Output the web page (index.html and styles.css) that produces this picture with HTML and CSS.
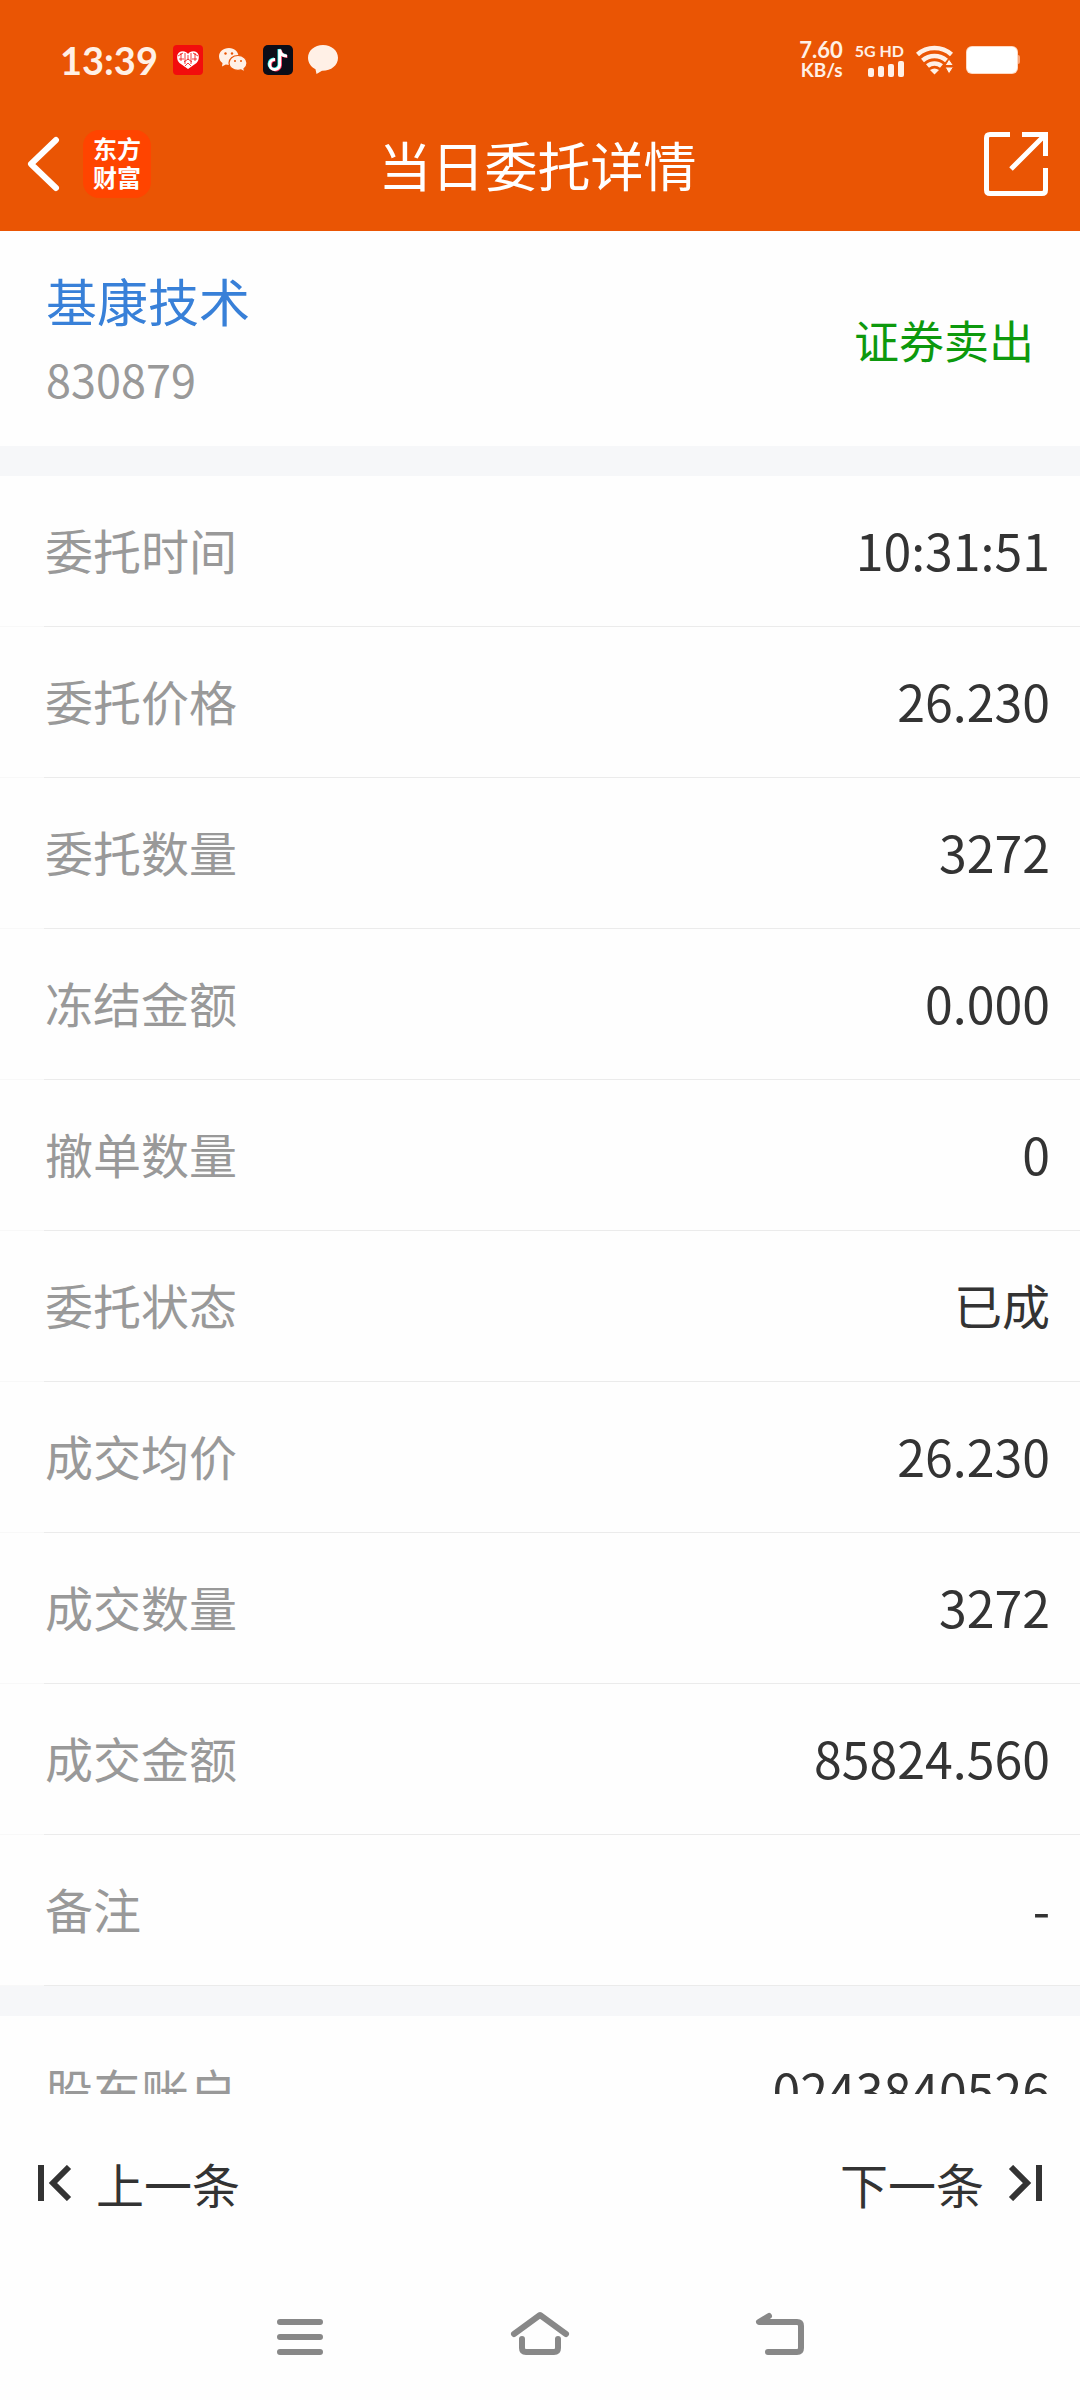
FILE: index.html
```html
<!DOCTYPE html>
<html lang="zh-CN">
<head>
    <meta charset="UTF-8">
    <meta name="viewport" content="width=device-width, initial-scale=1.0">
    <title>当日委托详情</title>
    <link rel="stylesheet" href="styles.css">
</head>
<body>
    <div class="app">
        <header class="header">
            <div class="status-bar">
                <span class="clock">13:39</span>
                <div class="notifications">
                    <svg width="30" height="30" viewBox="0 0 30 30">
                        <rect width="30" height="30" rx="4" fill="#f20d0d"/>
                        <path d="M15 24 L6.500 18 C3.500 15 3.500 9.500 6 7.500 C9 5.500 13 6 15 9 C17 6 21 5.500 24 7.500 C26.500 9.500 26.500 15 23.500 18 Z" fill="#fff"/>
                        <path d="M5 11 L10 8 M8 8 V16 M12 8 V19 M6 14 H11 M15 10 V15 M18 8 V19 M22 8 V16 M20 8 L25 11 M19 14 H24 M11 17 L15 14 L19 17 M12 21 L15 18 L18 21" fill="none" stroke="#f20d0d" stroke-width="0.800"/>
                    </svg>
                    <svg width="30" height="30" viewBox="0 0 30 30">
                        <path d="M11 3 C5 3 1 7 1 11.500 C1 14 2.300 16.500 4.500 18 L4 21.500 L7.800 19.500 C9 19.800 10 20 11.500 20 C17 20 20.500 16 20.500 11.500 C20.500 7 16.500 3 11 3 Z" fill="#fff0e6"/>
                        <path d="M20 10.500 C14.800 10.500 11 13.800 11 18 C11 22.200 14.800 25.300 20 25.300 C21 25.300 22 25.200 23 24.900 L26.600 27 L26 23.700 C28 22.300 29 20.300 29 18 C29 13.800 25.200 10.500 20 10.500 Z" fill="#fff0e6" stroke="#ea5504" stroke-width="1.200"/>
                        <g fill="#ea5504">
                            <circle cx="7.500" cy="8.500" r="1.200"/>
                            <circle cx="14" cy="8.500" r="1.200"/>
                            <circle cx="17" cy="16" r="1"/>
                            <circle cx="23" cy="16" r="1"/>
                        </g>
                    </svg>
                    <svg width="30" height="30" viewBox="0 0 30 30">
                        <rect width="30" height="30" rx="5" fill="#0c0d18"/>
                        <g fill="none" stroke-width="3">
                            <path d="M16 4 V19.500 A5 5 0 1 1 11 14 M16 4 C16.500 8 19 10.500 23 10.500" stroke="#25f4ee"/>
                            <path d="M17.500 5.500 V20.500 A5 5 0 1 1 12.500 15 M17.500 5.500 C18 9 20.500 11.500 24.500 11.500" stroke="#fe2c55"/>
                            <path d="M16.700 4.500 V20 A5 5 0 1 1 12 14.500 M16.700 4.500 C17.300 8.500 20 11 24 11" stroke="#fff"/>
                        </g>
                    </svg>
                    <svg width="30" height="30" viewBox="0 0 30 30">
                        <path d="M15 0 C6.500 0 0 5.500 0 12.800 C0 17.800 3 22 7.500 24.200 L8.500 29 L14 25.800 C23 26 30 20.500 30 12.800 C30 5.500 23.500 0 15 0 Z" fill="#fff0e6"/>
                    </svg>
                </div>
                <div class="system">
                    <div class="net-speed">
                        <span>7.60</span>
                        <span class="unit">KB/s</span>
                    </div>
                    <div class="signal">
                        <span>5G HD</span>
                        <svg width="36" height="16" viewBox="0 0 36 16" fill="#fff0e6">
                            <rect x="0" y="7" width="6" height="9" rx="2"/>
                            <rect x="10" y="5" width="6" height="11" rx="2"/>
                            <rect x="20" y="3" width="6" height="13" rx="2"/>
                            <rect x="30" y="0" width="6" height="16" rx="2"/>
                        </svg>
                    </div>
                    <svg width="38" height="30" viewBox="0 0 38 30">
                        <g fill="none" stroke="#fff0e6" stroke-width="4.500">
                            <path d="M1.500 9.500 C11 0.800 26 0.800 35.500 9.500"/>
                            <path d="M6.500 15.500 C13.500 9.500 23.500 9.500 30.500 15.500"/>
                            <path d="M11.500 21 C15.500 17.500 21.500 17.500 25.500 21"/>
                        </g>
                        <path d="M14 25 Q18.500 22 23 25 L18.500 29.500 Z" fill="#fff0e6"/>
                        <path d="M29 20.500 L33 14 L37.500 20.500 Z M29 22 L33 29 L37.500 22 Z" fill="#fff0e6" stroke="#ea5504" stroke-width="1"/>
                    </svg>
                    <svg width="54" height="28" viewBox="0 0 54 28">
                        <rect x="50" y="9" width="4" height="9" rx="2" fill="#f9a67b"/>
                        <rect x="0" y="0" width="52" height="28" rx="6" fill="#ffd9c2"/>
                        <rect x="1" y="1" width="50" height="26" rx="5" fill="#fff"/>
                    </svg>
                </div>
            </div>
            <div class="title-bar">
                <div class="title-left">
                    <button class="icon-btn" type="button" aria-label="返回">
                        <svg width="34" height="56" viewBox="0 0 34 56" fill="none" stroke="#fff" stroke-width="6" stroke-linecap="round" stroke-linejoin="round">
                            <path d="M29 4 L4 28 L29 52"/>
                        </svg>
                    </button>
                    <div class="logo"><span>东方</span><span>财富</span></div>
                </div>
                <h1>当日委托详情</h1>
                <button class="icon-btn share" type="button" aria-label="分享">
                    <svg width="64" height="64" viewBox="0 0 64 64" fill="none" stroke="#fff" stroke-width="5">
                        <path d="M26 2.500 H6 Q2.500 2.500 2.500 6 V58 Q2.500 61.500 6 61.500 H58 Q61.500 61.500 61.500 58 V36"/>
                        <path d="M38 2.500 H61.500 V24 M61 3 L27 37"/>
                    </svg>
                </button>
            </div>
        </header>

        <main class="content">
            <section class="stock">
                <div>
                    <a class="stock-name" href="#">基康技术</a>
                    <div class="stock-code">830879</div>
                </div>
                <span class="direction">证券卖出</span>
            </section>

            <dl class="details">
                <div class="row"><dt>委托时间</dt><dd>10:31:51</dd></div>
                <div class="row"><dt>委托价格</dt><dd>26.230</dd></div>
                <div class="row"><dt>委托数量</dt><dd>3272</dd></div>
                <div class="row"><dt>冻结金额</dt><dd>0.000</dd></div>
                <div class="row"><dt>撤单数量</dt><dd>0</dd></div>
                <div class="row"><dt>委托状态</dt><dd class="text">已成</dd></div>
                <div class="row"><dt>成交均价</dt><dd>26.230</dd></div>
                <div class="row"><dt>成交数量</dt><dd>3272</dd></div>
                <div class="row"><dt>成交金额</dt><dd>85824.560</dd></div>
                <div class="row"><dt>备注</dt><dd>-</dd></div>
            </dl>

            <dl class="details">
                <div class="row"><dt>股东账户</dt><dd>0243840526</dd></div>
            </dl>
        </main>

        <footer class="pager">
            <button class="pager-btn" type="button">
                <svg width="34" height="36" viewBox="0 0 34 36" fill="none" stroke="#333" stroke-width="6">
                    <path d="M3 0 V36 M31 2 L15 18 L31 34"/>
                </svg>
                上一条
            </button>
            <button class="pager-btn" type="button">
                下一条
                <svg width="34" height="36" viewBox="0 0 34 36" fill="none" stroke="#333" stroke-width="6">
                    <path d="M31 0 V36 M3 2 L19 18 L3 34"/>
                </svg>
            </button>
        </footer>

        <nav class="system-nav">
            <button class="icon-btn" type="button" aria-label="最近任务">
                <svg width="60" height="46" viewBox="0 0 60 46">
                    <path d="M10 11 H50 M10 26 H50 M10 41 H50"/>
                </svg>
            </button>
            <button class="icon-btn" type="button" aria-label="主页">
                <svg width="60" height="46" viewBox="0 0 60 46">
                    <path d="M4 23 L30 4 L56 23 M12 28 V37 Q12 41 16 41 H44 Q48 41 48 37 V28"/>
                </svg>
            </button>
            <button class="icon-btn" type="button" aria-label="返回">
                <svg width="60" height="46" viewBox="0 0 60 46">
                    <path d="M19 5 L9 11 H47 Q51 11 51 15 V37 Q51 41 47 41 H18"/>
                </svg>
            </button>
        </nav>
    </div>
</body>
</html>
```
FILE: styles.css
```css
* {
    margin: 0;
    padding: 0;
    box-sizing: border-box;
}

body {
    font-family: 'Noto Sans CJK SC', sans-serif;
    background: #fefefe;
    color: #333;
}

button {
    border: none;
    background: transparent;
    font-family: inherit;
    cursor: pointer;
}

svg {
    display: block;
    flex-shrink: 0;
}

.app {
    height: 100vh;
    display: flex;
    flex-direction: column;
}

/* header */
.header {
    background: #ea5504;
    color: #fff;
}

.status-bar {
    height: 96px;
    padding: 24px 60px 0 60px;
    display: flex;
    align-items: center;
    color: #fff0e6;
    font-family: Lato, sans-serif;
    font-weight: 700;
}

.clock {
    font-size: 38px;
    line-height: 40px;
}

.notifications {
    display: flex;
    gap: 15px;
    margin-left: 15px;
}

.system {
    display: flex;
    align-items: center;
    gap: 12px;
    margin-left: auto;
}

.net-speed {
    display: flex;
    flex-direction: column;
    text-align: right;
    font-size: 22px;
    line-height: 20px;
}

.net-speed .unit {
    font-size: 19px;
}

.signal {
    display: flex;
    flex-direction: column;
    align-items: flex-end;
    gap: 2px;
    font-size: 16px;
    line-height: 16px;
}

.title-bar {
    height: 135px;
    padding: 0 32px 0 27px;
    display: grid;
    grid-template-columns: 1fr auto 1fr;
    align-items: center;
}

.title-bar h1 {
    font-size: 53px;
    font-weight: 400;
    line-height: 64px;
}

.title-left {
    display: flex;
    align-items: center;
    gap: 22px;
}

.icon-btn.share {
    justify-self: end;
}

.logo {
    width: 68px;
    height: 68px;
    border-radius: 16px;
    background: #ff4400;
    display: flex;
    flex-direction: column;
    align-items: center;
    padding-top: 3px;
    font-size: 24px;
    font-weight: 700;
    line-height: 29px;
}

/* scrolling content */
.content {
    flex: 1;
    min-height: 0;
    overflow-y: auto;
    scrollbar-width: none;
}

.stock {
    display: flex;
    justify-content: space-between;
    align-items: center;
    padding: 37px 46px 35px 46px;
}

.stock-name {
    display: block;
    color: #3880d8;
    font-size: 51px;
    line-height: 64px;
    text-decoration: none;
}

.stock-code {
    margin-top: 15px;
    color: #999;
    font-size: 45px;
    line-height: 64px;
}

.direction {
    color: #0d990d;
    font-size: 45px;
    line-height: 64px;
}

.details {
    border-top: 30px solid #f6f7f9;
}

.row {
    display: flex;
    justify-content: space-between;
    align-items: center;
    padding: 41px 30px 45px 45px;
    border-bottom: 1px solid #ebebeb;
    line-height: 64px;
    border-image: linear-gradient(to right, #f8f8f8 45px, #ebebeb 45px) 1;
}

.row dt {
    color: #999;
    font-size: 48px;
}

.row dd {
    font-size: 50px;
}

.row dd.text {
    font-size: 48px;
}

/* previous / next */
.pager {
    display: flex;
    justify-content: space-between;
    padding: 57px 38px 63px;
}

.pager-btn {
    display: flex;
    align-items: center;
    gap: 24px;
    color: #333;
    font-size: 48px;
    line-height: 64px;
}

.system-nav {
    display: flex;
    justify-content: center;
    gap: 180px;
    padding: 33px 0 43px;
}

.system-nav svg {
    fill: none;
    stroke: #888;
    stroke-width: 6;
    stroke-linecap: round;
    stroke-linejoin: round;
}
```
